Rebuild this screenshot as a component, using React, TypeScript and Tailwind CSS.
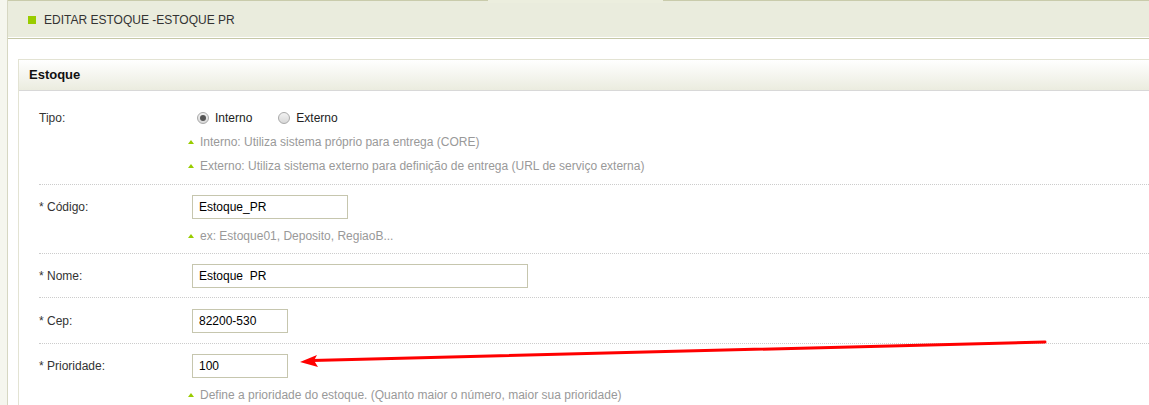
import React from 'react';

const Hint: React.FC<{ children: React.ReactNode; className?: string }> = ({ children, className = '' }) => (
    <div className={`flex items-center h-[24px] -ml-[4px] text-[12px] text-[#999999] ${className}`}>
        <span className="w-0 h-0 border-l-[3px] border-r-[3px] border-b-[4px] border-l-transparent border-r-transparent border-b-[#99cc00] mr-[6px]" />
        <span>{children}</span>
    </div>
);

const Radio: React.FC<{ checked?: boolean; label: string }> = ({ checked, label }) => (
    <label className="flex items-center">
        <span className="w-[12px] h-[12px] rounded-full border border-[#a9a9a9] bg-gradient-to-b from-[#f2f2f2] to-[#d8d8d8] flex items-center justify-center">
            {checked && <span className="w-[6px] h-[6px] rounded-full bg-[#555555]" />}
        </span>
        <span className="ml-[6px] text-[12px] text-[#222222]">{label}</span>
    </label>
);

const Field: React.FC<{ value: string; width: string }> = ({ value, width }) => (
    <div className={`h-[24px] ${width} border border-[#c6c6ae] bg-white flex items-center pl-[6px] text-[12px] text-black whitespace-pre`}>
        {value}
    </div>
);

const Row: React.FC<{ label: string; children: React.ReactNode; className?: string }> = ({ label, children, className = '' }) => (
    <div className={`flex border-b border-dotted border-[#cccccc] ${className}`}>
        <div className="w-[153px] shrink-0 h-[24px] flex items-center text-[12px] text-[#333333]">{label}</div>
        <div className="flex-1">{children}</div>
    </div>
);

export default function App() {
    return (
        <div className="relative flex min-h-[405px] h-[405px] overflow-hidden bg-white font-['Liberation_Sans',Arial,sans-serif]">
            <div className="w-[8px] shrink-0 bg-[#f5f6ee] border-r border-[#d6d7c2]" />
            <div className="flex-1 relative">
                <div className="relative h-[39px] bg-[#eaecdd] border-t border-[#c9cbab] border-b border-b-[#c6c8a6] shadow-[inset_0_-1px_0_#ffffff] flex items-center pl-[20px]">
                    <span className="w-[8px] h-[8px] bg-[#99cc00]" />
                    <span className="ml-[8px] text-[12px] text-[#333333]">EDITAR ESTOQUE -ESTOQUE PR</span>
                    <div className="absolute -top-px left-[480px] w-[175px] h-[3px] bg-[#eceede]" />
                </div>
                <div className="pl-[10px] pt-[20px]">
                    <div className="border-l border-t border-[#e3e3d3]">
                        <div className="h-[31px] bg-gradient-to-b from-white to-[#ebecdf] border-b border-[#d8d8d8] flex items-center pl-[10px]">
                            <span className="text-[13px] font-bold text-[#111111]">Estoque</span>
                        </div>
                        <div className="pl-[20px]">
                            <Row label="Tipo:" className="pt-[15px] pb-[6px]">
                                <div className="flex items-center h-[24px] ml-[5px] gap-[26px]">
                                    <Radio checked label="Interno" />
                                    <Radio label="Externo" />
                                </div>
                                <Hint>Interno: Utiliza sistema próprio para entrega (CORE)</Hint>
                                <Hint>Externo: Utiliza sistema externo para definição de entrega (URL de serviço externa)</Hint>
                            </Row>
                            <Row label="* Código:" className="pt-[10px] pb-[5px]">
                                <Field value="Estoque_PR" width="w-[156px]" />
                                <Hint className="mt-[5px]">ex: Estoque01, Deposito, RegiaoB...</Hint>
                            </Row>
                            <Row label="* Nome:" className="pt-[10px] pb-[9px]">
                                <Field value="Estoque  PR" width="w-[336px]" />
                            </Row>
                            <Row label="* Cep:" className="pt-[11px] pb-[10px]">
                                <Field value="82200-530" width="w-[96px]" />
                            </Row>
                            <Row label="* Prioridade:" className="pt-[10px] pb-[5px] border-b-0">
                                <Field value="100" width="w-[96px]" />
                                <Hint className="mt-[5px]">Define a prioridade do estoque. (Quanto maior o número, maior sua prioridade)</Hint>
                            </Row>
                        </div>
                    </div>
                </div>
            </div>
            <svg className="absolute left-0 top-0 pointer-events-none" width="1149" height="405">
                <line x1="1045" y1="342" x2="312" y2="360.5" stroke="#ff0000" strokeWidth="3" strokeLinecap="round" />
                <polygon points="300,362 317,355 314,360.6 318,367" fill="#ff0000" />
            </svg>
        </div>
    );
}
